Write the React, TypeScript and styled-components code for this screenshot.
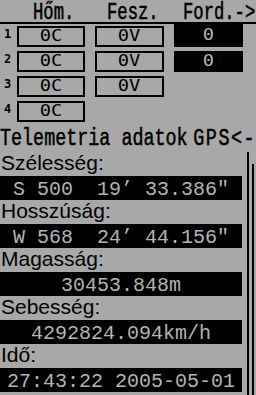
import React from "react";
import styled, { createGlobalStyle } from "styled-components";

const Global = createGlobalStyle`
  html, body { margin: 0; padding: 0; background: #a8a8a8; }
  #root { width: 256px; height: 395px; }
  * { box-sizing: border-box; }
`;

/* number column, then three value columns */
const COLS = "7px 68px 69px 69px";

const Screen = styled.div`
  width: 256px;
  height: 395px;
  overflow: hidden;
  background: #a8a8a8;
  color: #000;
  display: flex;
  flex-direction: column;
`;

const HeaderRow = styled.div`
  display: grid;
  grid-template-columns: ${COLS};
  column-gap: 10px;
  height: 24px;
  border-bottom: 2px solid #000;
`;

const HeadCell = styled.div<{ $indent: number }>`
  height: 22px;
  padding-left: ${(p) => p.$indent}px;
  padding-top: 5px;
  font-family: "Liberation Mono", monospace;
  font-size: 17.2px;
  line-height: 20px;
  white-space: nowrap;
  -webkit-text-stroke: 0.4px #000;
`;

/* pixel-LCD font: tall narrow glyphs, stretched vertically about the baseline */
const Tall = styled.span<{ $sy: number; $oy: number }>`
  display: inline-block;
  transform: scaleY(${(p) => p.$sy});
  transform-origin: 0 ${(p) => p.$oy}px;
`;

const Body = styled.div`
  display: flex;
  flex-direction: column;
  gap: 4px;
  padding-top: 2px;
`;

const Row = styled.div`
  display: grid;
  grid-template-columns: ${COLS};
  column-gap: 10px;
  height: 21px;
`;

const RowNum = styled.div`
  font-family: "DejaVu Sans Mono", monospace;
  font-weight: bold;
  font-size: 12px;
  line-height: 16px;
  padding-left: 4px;
  white-space: nowrap;
`;

const Cell = styled.div<{ $dark?: boolean; $joined?: boolean }>`
  border: 2px solid #000;
  background: ${(p) => (p.$dark ? "#000" : "transparent")};
  color: ${(p) => (p.$dark ? "#b4b4b4" : "#000")};
  margin-top: ${(p) => (p.$joined ? "-2px" : "0")};
  display: flex;
  align-items: center;
  justify-content: center;
  font-family: "DejaVu Sans Mono", monospace;
  font-size: 15px;
  line-height: 17px;
`;

const Wide = styled.span`
  display: inline-block;
  transform: scaleX(1.25);
  transform-origin: center;
`;

const TitleBar = styled.div`
  display: flex;
  justify-content: space-between;
  height: 30px;
  padding-top: 9px;
  font-family: "Liberation Mono", monospace;
  font-size: 18.4px;
  line-height: 20px;
  white-space: nowrap;
  -webkit-text-stroke: 0.4px #000;
`;

const TabLabel = styled(Tall)`
  letter-spacing: 1.5px;
`;

const ListArea = styled.div`
  flex: 1;
  display: flex;
  min-height: 0;
`;

const Fields = styled.div`
  width: 242px;
  display: flex;
  flex-direction: column;
`;

const FieldLabel = styled.div`
  height: 24px;
  padding-left: 1px;
  font-family: "Liberation Sans", sans-serif;
  font-size: 21px;
  line-height: 22px;
  white-space: nowrap;
`;

const FieldValue = styled.div`
  height: 24px;
  padding-top: 3px;
  background: #000;
  color: #b4b4b4;
  font-family: "Liberation Mono", monospace;
  font-size: 20px;
  line-height: 21px;
  text-align: center;
  white-space: pre;
`;

const ScrollTrack = styled.div`
  margin-left: 5px;
  width: 7px;
  border-left: 2px solid #000;
  padding-left: 3px;
  padding-top: 12px;
  display: flex;
  flex-direction: column;
`;

const ScrollThumb = styled.div`
  flex: 1;
  width: 2px;
  background: #000;
`;

const rows = [
  { n: "1", t: "0C", v: "0V", f: "0" },
  { n: "2", t: "0C", v: "0V", f: "0" },
  { n: "3", t: "0C", v: "0V" },
  { n: "4", t: "0C" },
];

const fields = [
  { label: "Szélesség:", value: "S 500  19’ 33.386\"" },
  { label: "Hosszúság:", value: "W 568  24’ 44.156\"" },
  { label: "Magasság:", value: "30453.848m" },
  { label: "Sebesség:", value: "4292824.094km/h" },
  { label: "Idő:", value: "27:43:22 2005-05-01" },
];

export default function App() {
  return (
    <>
      <Global />
      <Screen>
        <HeaderRow>
          <div />
          <HeadCell $indent={16}>
            <Tall $sy={1.41} $oy={14.6}>Hőm.</Tall>
          </HeadCell>
          <HeadCell $indent={12}>
            <Tall $sy={1.41} $oy={14.6}>Fesz.</Tall>
          </HeadCell>
          <HeadCell $indent={9}>
            <Tall $sy={1.41} $oy={14.6}>Ford.-&gt;</Tall>
          </HeadCell>
        </HeaderRow>
        <Body>
          {rows.map((r, i) => (
            <Row key={r.n}>
              <RowNum>{r.n}</RowNum>
              <Cell>
                <Wide>{r.t}</Wide>
              </Cell>
              {r.v ? (
                <Cell>
                  <Wide>{r.v}</Wide>
                </Cell>
              ) : (
                <div />
              )}
              {r.f ? (
                <Cell $dark $joined={i === 0}>
                  <Wide>{r.f}</Wide>
                </Cell>
              ) : (
                <div />
              )}
            </Row>
          ))}
        </Body>
        <TitleBar>
          <Tall $sy={1.32} $oy={14.9}>Telemetria adatok</Tall>
          <TabLabel $sy={1.32} $oy={14.9}>GPS&lt;-</TabLabel>
        </TitleBar>
        <ListArea>
          <Fields>
            {fields.map((f) => (
              <React.Fragment key={f.label}>
                <FieldLabel>{f.label}</FieldLabel>
                <FieldValue>{f.value}</FieldValue>
              </React.Fragment>
            ))}
          </Fields>
          <ScrollTrack>
            <ScrollThumb />
          </ScrollTrack>
        </ListArea>
      </Screen>
    </>
  );
}
